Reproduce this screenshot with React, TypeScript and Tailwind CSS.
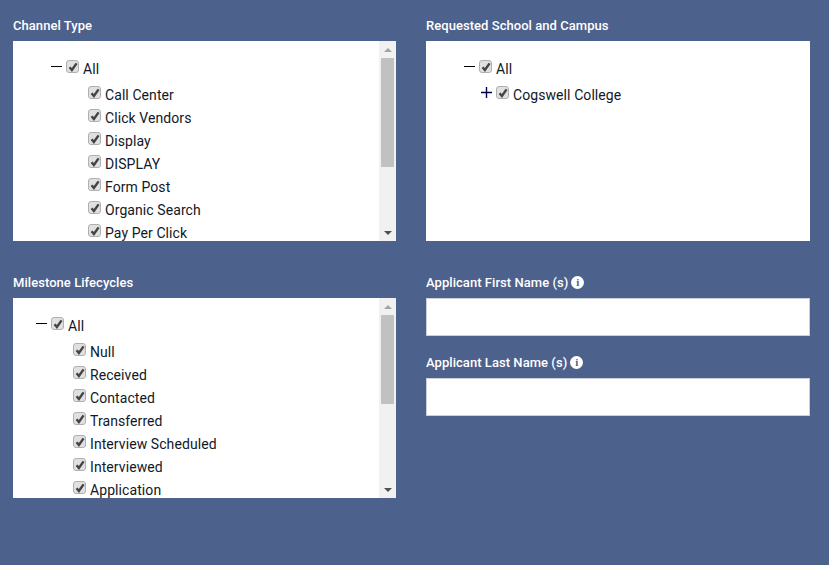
import React from 'react';

const Check = () => (
  <span className="flex h-[13px] w-[13px] shrink-0 items-center justify-center rounded-[3px] border border-[#b0b0b0] bg-[#e0e0e0]">
    <svg width="10" height="10" viewBox="0 0 10 10">
      <path d="M1.6 5.2 L3.9 8 L8.6 1.4" fill="none" stroke="#444444" strokeWidth="2.4" />
    </svg>
  </span>
);

const Minus = () => <span className="mr-[4px] mb-[7px] h-[1px] w-[11px] shrink-0 bg-black" />;

const Plus = () => (
  <svg className="mr-[4px] mb-[6px] shrink-0" width="11" height="11" viewBox="0 0 11 11">
    <path d="M0 5.5 H11 M5.5 0 V11" stroke="#00004d" strokeWidth="1.4" />
  </svg>
);

const Row = ({ label, icon, className }: { label: string; icon?: React.ReactNode; className: string }) => (
  <div className={`flex h-[23px] items-center whitespace-nowrap ${className}`}>
    {icon}
    <span className="relative -top-[3px]">
      <Check />
    </span>
    <span className="ml-[4px]">{label}</span>
  </div>
);

const Scrollbar = ({ thumb }: { thumb: string }) => (
  <div className="flex w-[17px] shrink-0 flex-col items-center bg-[#f1f1f1]">
    <div className="flex h-[17px] items-center justify-center">
      <span className="h-0 w-0 border-x-[4px] border-b-[4px] border-x-transparent border-b-[#a3a3a3]" />
    </div>
    <div className={`w-[13px] bg-[#c1c1c1] ${thumb}`} />
    <div className="flex-1" />
    <div className="flex h-[17px] items-center justify-center">
      <span className="h-0 w-0 border-x-[4px] border-t-[4px] border-x-transparent border-t-[#505050]" />
    </div>
  </div>
);

const TreeBox = ({ indent, childIndent, items, thumb }: { indent: string; childIndent: string; items: string[]; thumb: string }) => (
  <div className="flex h-[200px] bg-white text-[14px] tracking-[0.08px] text-[#111827]">
    <div className="min-w-0 flex-1 overflow-hidden pt-[17px]">
      <Row label="All" icon={<Minus />} className={`mb-[3px] ${indent}`} />
      {items.map((item) => (
        <Row key={item} label={item} className={childIndent} />
      ))}
    </div>
    <Scrollbar thumb={thumb} />
  </div>
);

const Label = ({ children }: { children: React.ReactNode }) => (
  <div className="mb-[7px] flex h-[18px] items-center gap-[3px] text-[13px] font-medium leading-none tracking-[0.05px] text-white">{children}</div>
);

const Info = () => (
  <span className="flex h-[13px] w-[13px] items-center justify-center rounded-full bg-white font-['Liberation_Serif',serif] text-[11px] font-bold text-[#4d618d]">
    i
  </span>
);

const channels = ['Call Center', 'Click Vendors', 'Display', 'DISPLAY', 'Form Post', 'Organic Search', 'Pay Per Click'];
const milestones = ['Null', 'Received', 'Contacted', 'Transferred', 'Interview Scheduled', 'Interviewed', 'Application'];

export default function App() {
  return (
    <div className="h-[565px] w-[829px] overflow-hidden bg-[#4d618d] pl-[13px] pr-[19px] pt-[16px] font-['Roboto',sans-serif]">
      <div className="grid grid-cols-[383px_384px] gap-x-[30px] gap-y-[32px]">
        <div>
          <Label>Channel Type</Label>
          <TreeBox indent="pl-[38px]" childIndent="pl-[75px]" items={channels} thumb="h-[109px]" />
        </div>
        <div>
          <Label>Requested School and Campus</Label>
          <div className="h-[200px] bg-white pt-[17px] text-[14px] tracking-[0.08px] text-[#111827]">
            <Row label="All" icon={<Minus />} className="mb-[3px] pl-[38px]" />
            <Row label="Cogswell College" icon={<Plus />} className="pl-[55px]" />
          </div>
        </div>
        <div>
          <Label>Milestone Lifecycles</Label>
          <TreeBox indent="pl-[23px]" childIndent="pl-[60px]" items={milestones} thumb="h-[89px]" />
        </div>
        <div>
          <Label>Applicant First Name (s) <Info /></Label>
          <input className="mb-[17px] block h-[38px] w-full border border-[#cbd0d8] bg-white" />
          <Label>Applicant Last Name (s) <Info /></Label>
          <input className="block h-[38px] w-full border border-[#cbd0d8] bg-white" />
        </div>
      </div>
    </div>
  );
}
